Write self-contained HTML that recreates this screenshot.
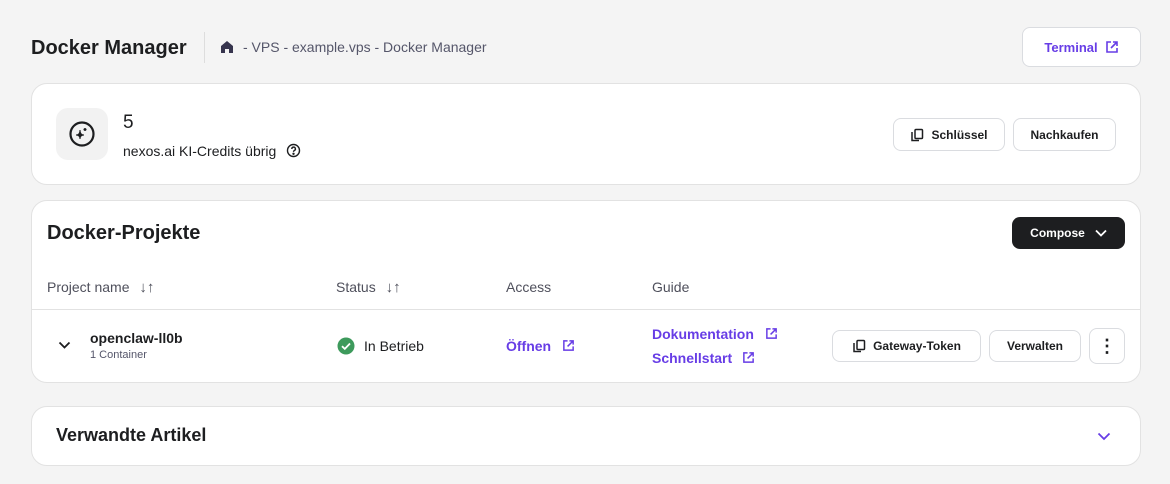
<!DOCTYPE html><html><head><meta charset="utf-8"><style>
*{box-sizing:border-box;margin:0;padding:0}
body{width:1170px;height:484px;background:#f4f4f4;font-family:"Liberation Sans",sans-serif;color:#1d1e20;position:relative;overflow:hidden}
.abs{position:absolute}
.card{position:absolute;background:#fff;border:1px solid #e2e2e2;border-radius:16px}
.btn{position:absolute;background:#fff;border:1px solid #dadce0;border-radius:8px;font-size:12px;font-weight:bold;display:flex;align-items:center;justify-content:center;gap:7px;color:#1d1e20}
.purple{color:#673de6;font-weight:bold}
.th{position:absolute;top:279px;font-size:14px;color:#4f505c}
</style></head><body>
<div class="abs" style="left:31px;top:37px;font-size:20px;font-weight:bold">Docker Manager</div>
<div class="abs" style="left:204px;top:32px;width:1px;height:31px;background:#ddd"></div>
<svg class="abs" style="left:219px;top:39px" width="16" height="16" viewBox="0 0 16 16"><path d="M2 7L8 2l6 5v7H10V10H6v4H2z" fill="#36344d"/></svg>
<div class="abs" style="left:243px;top:39px;font-size:14px;color:#55566a">- VPS - example.vps - Docker Manager</div>
<div class="btn" style="left:1022px;top:27px;width:119px;height:40px;color:#673de6;font-size:13px">Terminal <svg width="14" height="14" viewBox="0 0 14 14" fill="none" stroke="#673de6" stroke-width="1.6"><path d="M6 2H2v10h10V8M8 2h4v4M12 2L6 8"/></svg></div>
<div class="card" style="left:31px;top:83px;width:1110px;height:102px"></div>
<div class="abs" style="left:56px;top:108px;width:52px;height:52px;background:#f2f2f2;border-radius:12px"></div>
<svg class="abs" style="left:68px;top:120px" width="28" height="28" viewBox="0 0 28 28" fill="none" stroke="#1d1e20" stroke-width="2.2"><circle cx="14" cy="14" r="11.5"/><path d="M12 10q0 5 -4 5q4 0 4 4q0 -4 4 -4q-4 0 -4-5z" fill="#1d1e20" stroke-width="1"/><path d="M17 8v3M15.5 9.5h3" stroke-width="1.5"/></svg>
<div class="abs" style="left:123px;top:112px;font-size:19px">5</div>
<div class="abs" style="left:123px;top:143px;font-size:14px">nexos.ai KI-Credits übrig</div>
<svg class="abs" style="left:286px;top:143px" width="15" height="15" viewBox="0 0 15 15" fill="none" stroke="#1d1e20" stroke-width="1.4"><circle cx="7.5" cy="7.5" r="6"/><path d="M5.8 6a1.8 1.8 0 1 1 2.4 1.6c-.6.3-.7.7-.7 1.3"/><circle cx="7.5" cy="10.8" r=".5" fill="#1d1e20"/></svg>
<div class="btn" style="left:893px;top:118px;width:112px;height:33px"><svg width="14" height="14" viewBox="0 0 14 14" fill="none" stroke="#1d1e20" stroke-width="1.5"><rect x="5" y="1.5" width="7.5" height="9" rx="1"/><path d="M2 4v8.5h7"/></svg>Schlüssel</div>
<div class="btn" style="left:1013px;top:118px;width:103px;height:33px">Nachkaufen</div>
<div class="card" style="left:31px;top:200px;width:1110px;height:183px"></div>
<div class="abs" style="left:47px;top:222px;font-size:20px;font-weight:bold">Docker-Projekte</div>
<div class="abs" style="left:1012px;top:217px;width:113px;height:32px;background:#1d1e20;border-radius:8px;color:#fff;font-size:12px;font-weight:bold;display:flex;align-items:center;justify-content:center;gap:10px">Compose <svg width="12" height="8" viewBox="0 0 12 8" fill="none" stroke="#fff" stroke-width="1.8"><path d="M1 1.5l5 5 5-5"/></svg></div>
<div class="th" style="left:47px">Project name <span style="margin-left:6px;font-size:15px">↓↑</span></div>
<div class="th" style="left:336px">Status <span style="margin-left:6px;font-size:15px">↓↑</span></div>
<div class="th" style="left:506px">Access</div>
<div class="th" style="left:652px">Guide</div>
<div class="abs" style="left:32px;top:309px;width:1108px;height:1px;background:#e2e2e2"></div>
<svg class="abs" style="left:58px;top:341px" width="13" height="9" viewBox="0 0 13 9" fill="none" stroke="#1d1e20" stroke-width="1.8"><path d="M1.5 1.5l5 5 5-5"/></svg>
<div class="abs" style="left:90px;top:330px;font-size:14px;font-weight:bold">openclaw-ll0b</div>
<div class="abs" style="left:90px;top:349px;font-size:11px;color:#55566a">1 Container</div>
<svg class="abs" style="left:337px;top:337px" width="18" height="18" viewBox="0 0 18 18"><circle cx="9" cy="9" r="8.5" fill="#3d9a5c"/><path d="M5 9.2l2.8 2.7L13 6.5" fill="none" stroke="#fff" stroke-width="1.8"/></svg>
<div class="abs" style="left:364px;top:338px;font-size:14px">In Betrieb</div>
<div class="abs purple" style="left:506px;top:338px;font-size:14px">Öffnen</div>
<svg class="abs" style="left:562px;top:339px" width="13" height="13" viewBox="0 0 14 14" fill="none" stroke="#673de6" stroke-width="1.6"><path d="M6 2H2v10h10V8M8 2h4v4M12 2L6 8"/></svg>
<div class="abs purple" style="left:652px;top:326px;font-size:14px">Dokumentation</div>
<svg class="abs" style="left:765px;top:327px" width="13" height="13" viewBox="0 0 14 14" fill="none" stroke="#673de6" stroke-width="1.6"><path d="M6 2H2v10h10V8M8 2h4v4M12 2L6 8"/></svg>
<div class="abs purple" style="left:652px;top:350px;font-size:14px">Schnellstart</div>
<svg class="abs" style="left:742px;top:351px" width="13" height="13" viewBox="0 0 14 14" fill="none" stroke="#673de6" stroke-width="1.6"><path d="M6 2H2v10h10V8M8 2h4v4M12 2L6 8"/></svg>
<div class="btn" style="left:832px;top:330px;width:149px;height:32px"><svg width="14" height="14" viewBox="0 0 14 14" fill="none" stroke="#1d1e20" stroke-width="1.5"><rect x="5" y="1.5" width="7.5" height="9" rx="1"/><path d="M2 4v8.5h7"/></svg>Gateway-Token</div>
<div class="btn" style="left:989px;top:330px;width:92px;height:32px">Verwalten</div>
<div class="btn" style="left:1089px;top:328px;width:36px;height:36px;font-size:18px;line-height:1">⋮</div>
<div class="card" style="left:31px;top:406px;width:1110px;height:60px"></div>
<div class="abs" style="left:56px;top:425px;font-size:18px;font-weight:bold;color:#1d1e20">Verwandte Artikel</div>
<svg class="abs" style="left:1097px;top:432px" width="14" height="9" viewBox="0 0 14 9" fill="none" stroke="#673de6" stroke-width="1.8"><path d="M1.5 1.5l5.5 5.5 5.5-5.5"/></svg>
</body></html>
